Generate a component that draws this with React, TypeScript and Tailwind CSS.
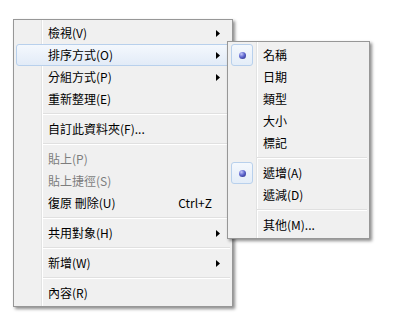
import type { FC, JSX } from "react";

type MenuRow =
    | { kind: "sep" }
    | { kind: "item"; label: string; arrow?: boolean; disabled?: boolean; shortcut?: string; active?: boolean };

const mainRows: MenuRow[] = [
    { kind: "item", label: "檢視(V)", arrow: true },
    { kind: "item", label: "排序方式(O)", arrow: true, active: true },
    { kind: "item", label: "分組方式(P)", arrow: true },
    { kind: "item", label: "重新整理(E)" },
    { kind: "sep" },
    { kind: "item", label: "自訂此資料夾(F)..." },
    { kind: "sep" },
    { kind: "item", label: "貼上(P)", disabled: true },
    { kind: "item", label: "貼上捷徑(S)", disabled: true },
    { kind: "item", label: "復原 刪除(U)", shortcut: "Ctrl+Z" },
    { kind: "sep" },
    { kind: "item", label: "共用對象(H)", arrow: true },
    { kind: "sep" },
    { kind: "item", label: "新增(W)", arrow: true },
    { kind: "sep" },
    { kind: "item", label: "內容(R)" },
];

type SubRow = { kind: "sep" } | { kind: "item"; label: string; checked?: boolean };

const subRows: SubRow[] = [
    { kind: "item", label: "名稱", checked: true },
    { kind: "item", label: "日期" },
    { kind: "item", label: "類型" },
    { kind: "item", label: "大小" },
    { kind: "item", label: "標記" },
    { kind: "sep" },
    { kind: "item", label: "遞增(A)", checked: true },
    { kind: "item", label: "遞減(D)" },
    { kind: "sep" },
    { kind: "item", label: "其他(M)..." },
];

const Arrow: FC = (): JSX.Element => (
    <svg width="4" height="7" viewBox="0 0 4 7" className="shrink-0">
        <path d="M0 0 L4 3.5 L0 7 Z" fill="#000" />
    </svg>
);

const Separator: FC<{ left: string }> = ({ left }): JSX.Element => (
    <div className={`h-[8px] flex flex-col justify-center ${left}`}>
        <div className="h-px bg-[#e0e0e0]"></div>
        <div className="h-px bg-white"></div>
    </div>
);

const SubMenu: FC = (): JSX.Element => (
    <div className="absolute left-[213px] top-[21px] w-[143px] border border-[#979797] p-[2px] shadow-[2px_2px_3px_rgba(0,0,0,0.45)] bg-[linear-gradient(to_right,#f0f0f0_28px,#e2e3e3_28px,#e2e3e3_29px,#ffffff_29px,#ffffff_30px,#f0f0f0_30px)]">
        {subRows.map((row, index) =>
            row.kind === "sep" ? (
                <Separator key={index} left="ml-[27px]" />
            ) : (
                <div key={index} className="h-[22px] flex items-center">
                    <div className="w-[22px] h-[22px] ml-[1px] shrink-0 flex items-center justify-center">
                        {row.checked && (
                            <div className="w-[22px] h-[22px] rounded-[3px] border border-[#b8d0ec] bg-[linear-gradient(to_bottom,#f4f8fd,#e4edf8)] flex items-center justify-center">
                                <div className="w-[7px] h-[7px] rounded-full bg-[radial-gradient(circle_at_35%_30%,#c4c8fa_0%,#6068d0_45%,#1f2478_100%)]"></div>
                            </div>
                        )}
                    </div>
                    <span className="ml-[10px] text-[12px] leading-none text-black whitespace-nowrap">{row.label}</span>
                </div>
            )
        )}
    </div>
);

export default function App(): JSX.Element {
    return (
        <div className="min-h-[327px] bg-white pt-[19px] pl-[13px] font-['Noto_Sans_CJK_TC','Noto_Sans',sans-serif]">
            <div className="relative w-[220px] border border-[#979797] p-[2px] shadow-[2px_2px_3px_rgba(0,0,0,0.45)] bg-[linear-gradient(to_right,#f0f0f0_27px,#e2e3e3_27px,#e2e3e3_28px,#ffffff_28px,#ffffff_29px,#f0f0f0_29px)]">
                {mainRows.map((row, index) =>
                    row.kind === "sep" ? (
                        <Separator key={index} left="ml-[27px]" />
                    ) : (
                        <div
                            key={index}
                            className={`h-[22px] flex items-center pl-[31px] pr-[9px] rounded-[3px] border ${row.active ? "border-[#b8d0ec] bg-[linear-gradient(to_bottom,#f4f8fd,#e2ebf7)]" : "border-transparent"}`}
                        >
                            <span className={`flex-1 text-[12px] leading-none whitespace-nowrap ${row.disabled ? "text-[#7d7d7d]" : "text-black"}`}>
                                {row.label}
                            </span>
                            {row.shortcut && <span className="text-[12px] leading-none text-black mr-[8px]">{row.shortcut}</span>}
                            {row.arrow && <Arrow />}
                        </div>
                    )
                )}
                <SubMenu />
            </div>
        </div>
    );
}
